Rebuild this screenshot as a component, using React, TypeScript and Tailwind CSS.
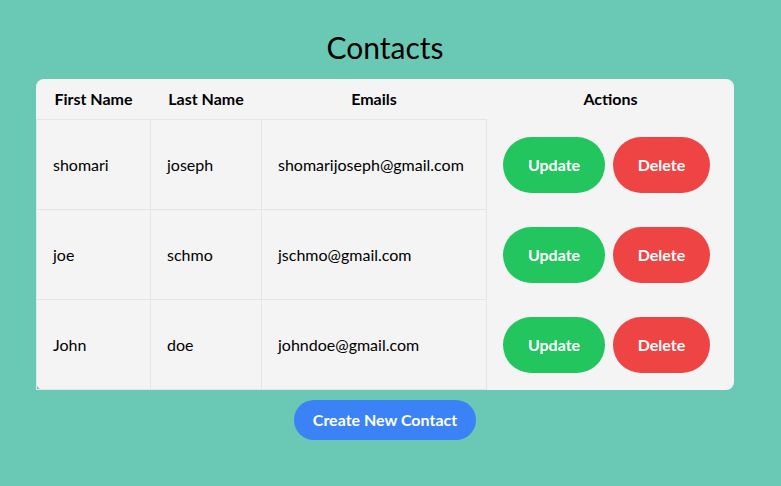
type Contact = {
  id: number;
  firstName: string;
  lastName: string;
  email: string;
};

const contacts: Contact[] = [
  { id: 1, firstName: "shomari", lastName: "joseph", email: "shomarijoseph@gmail.com" },
  { id: 2, firstName: "joe", lastName: "schmo", email: "jschmo@gmail.com" },
  { id: 3, firstName: "John", lastName: "doe", email: "johndoe@gmail.com" },
];

export default function App() {
  return (
    <div
      className="flex min-h-[486px] flex-col items-center bg-[#6ac9b4] pt-[29px] pr-[11px] text-black"
      style={{ fontFamily: 'Lato, "Noto Sans", sans-serif' }}
    >
      <h1 className="mb-[14px] text-3xl leading-9">Contacts</h1>

      <div className="w-[698px] rounded-lg bg-[#f4f4f4]">
        <table className="w-full table-fixed border-collapse text-base">
          <colgroup>
            <col className="w-[114px]" />
            <col className="w-[111px]" />
            <col className="w-[225px]" />
            <col className="w-[248px]" />
          </colgroup>
          <thead>
            <tr>
              <th className="px-2 py-2 text-center font-bold leading-6 whitespace-nowrap">First Name</th>
              <th className="px-2 py-2 text-center font-bold leading-6 whitespace-nowrap">Last Name</th>
              <th className="px-2 py-2 text-center font-bold leading-6">Emails</th>
              <th className="px-2 py-2 text-center font-bold leading-6">Actions</th>
            </tr>
          </thead>
          <tbody>
            {contacts.map((c) => (
              <tr key={c.id}>
                <td className="border border-[#e5e5e5] px-4 text-left">{c.firstName}</td>
                <td className="border border-[#e5e5e5] px-4 text-left">{c.lastName}</td>
                <td className="border border-[#e5e5e5] px-4 text-left whitespace-nowrap">{c.email}</td>
                <td className="px-4 py-[17px]">
                  <div className="flex gap-2">
                    <button className="h-14 w-[102px] rounded-full bg-[#22c55e] font-bold text-white">
                      Update
                    </button>
                    <button className="h-14 w-[97px] rounded-full bg-[#ef4444] font-bold text-white">
                      Delete
                    </button>
                  </div>
                </td>
              </tr>
            ))}
          </tbody>
        </table>
      </div>

      <button className="mt-[10px] h-10 w-[182px] rounded-full bg-[#3b82f6] font-bold text-white">
        Create New Contact
      </button>
    </div>
  );
}
